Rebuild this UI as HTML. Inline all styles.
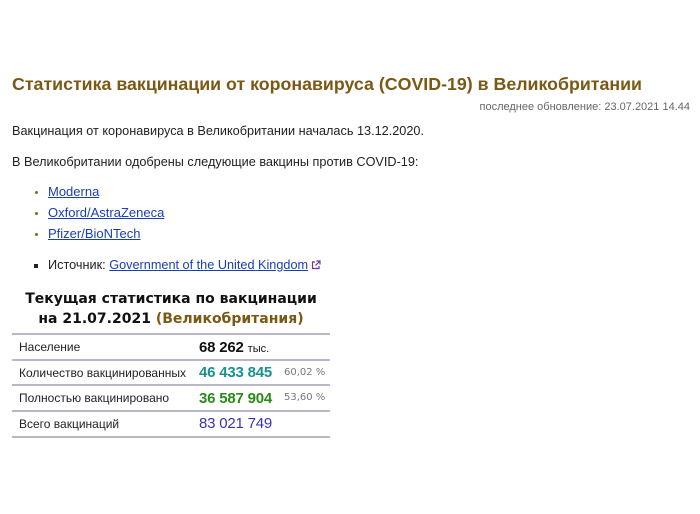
<!DOCTYPE html>
<html><head><meta charset="utf-8"><style>
body{margin:0;background:#fff;font-family:"Liberation Sans",Arial,sans-serif;color:#222;width:700px;height:514px;position:relative;overflow:hidden}
.a{position:absolute;white-space:nowrap}
h1{position:absolute;left:12px;top:74px;margin:0;font-size:17.8px;font-weight:bold;color:#7b5814;white-space:nowrap}
a{color:#1a3fb5;text-decoration:underline}
.dot{position:absolute;width:3px;height:3px;background:#8a6a20;border-radius:50%}
.t{position:absolute;font-family:"DejaVu Sans",sans-serif;font-weight:bold;font-size:14px;text-align:center;width:318px;left:12px;line-height:20px;color:#111}
.ln{position:absolute;left:12px;width:318px;height:2px;background:#b8b8c8}
.c{position:absolute;font-size:12px;color:#222}
.n{position:absolute;font-size:15px;font-weight:bold;letter-spacing:-0.2px}
.p{position:absolute;font-size:10px;color:#777;font-family:"DejaVu Sans",sans-serif}
</style></head><body>
<h1>Статистика вакцинации от коронавируса (COVID-19) в Великобритании</h1>
<div class="a" style="right:10px;top:101px;font-size:11px;color:#666">последнее обновление: 23.07.2021 14.44</div>
<div class="a" style="left:12px;top:124px;font-size:12.7px">Вакцинация от коронавируса в Великобритании началась 13.12.2020.</div>
<div class="a" style="left:12px;top:155px;font-size:12.7px">В Великобритании одобрены следующие вакцины против COVID-19:</div>
<div class="dot" style="left:35px;top:191px"></div><div class="a" style="left:48px;top:184px;font-size:13px"><a>Moderna</a></div>
<div class="dot" style="left:35px;top:212px"></div><div class="a" style="left:48px;top:205px;font-size:13px"><a>Oxford/AstraZeneca</a></div>
<div class="dot" style="left:35px;top:233px"></div><div class="a" style="left:48px;top:226px;font-size:13px"><a>Pfizer/BioNTech</a></div>
<div style="position:absolute;left:34px;top:264px;width:4px;height:4px;background:#222"></div>
<div class="a" style="left:48px;top:258px;font-size:12.7px">Источник: <a>Government of the United Kingdom</a><svg style="margin-left:3px;vertical-align:-1px" width="10" height="10" viewBox="0 0 10 10"><path d="M4 2H1.5v6.5H8V6M5.5 1H9v3.5M9 1L4.5 5.5" fill="none" stroke="#7030a0" stroke-width="1.2"/></svg></div>
<div class="t" style="top:289px">Текущая статистика по вакцинации<br>на 21.07.2021 <span style="color:#7b5814">(Великобритания)</span></div>
<div class="ln" style="top:333px"></div>
<div class="ln" style="top:359px"></div>
<div class="ln" style="top:384px"></div>
<div class="ln" style="top:410px"></div>
<div class="ln" style="top:436px"></div>
<div class="c" style="left:19px;top:340px">Население</div>
<div class="n" style="left:199px;top:339px;color:#111">68 262 <span style="font-size:11px;font-weight:normal;letter-spacing:0">тыс.</span></div>
<div class="c" style="left:19px;top:366px">Количество вакцинированных</div>
<div class="n" style="left:199px;top:364px;color:#1a9090">46 433 845</div>
<div class="p" style="left:284px;top:367px">60,02 %</div>
<div class="c" style="left:19px;top:391px">Полностью вакцинировано</div>
<div class="n" style="left:199px;top:390px;color:#2a8a1a">36 587 904</div>
<div class="p" style="left:284px;top:392px">53,60 %</div>
<div class="c" style="left:19px;top:417px">Всего вакцинаций</div>
<div class="n" style="left:199px;top:415px;color:#3535b5;font-weight:normal">83 021 749</div>
</body></html>
